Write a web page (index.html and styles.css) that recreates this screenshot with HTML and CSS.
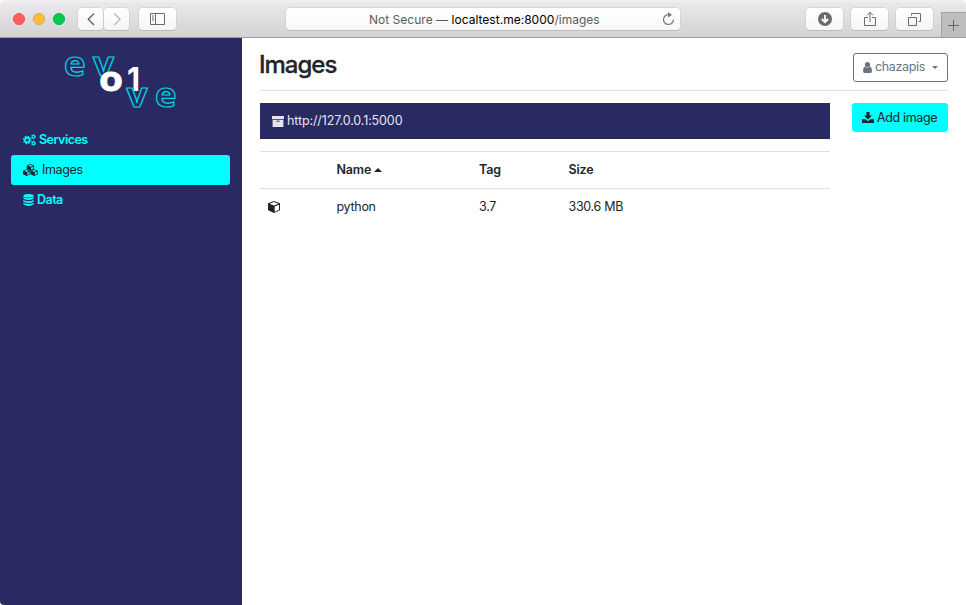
FILE: index.html
```html
<!DOCTYPE html>
<html lang="en">
<head>
<meta charset="utf-8">
<title>Images</title>
<link rel="stylesheet" href="styles.css">
</head>
<body>
<div class="window">
  <header class="toolbar">
    <div class="lights"><i class="light red"></i><i class="light yellow"></i><i class="light green"></i></div>
    <div class="history">
      <span class="tool small"><svg width="24" height="22" viewBox="0 0 24 22"><path d="M15 5.5 9.3 11.2 15 17" fill="none" stroke="#6a6a6a" stroke-width="1.5"/></svg></span>
      <span class="tool small"><svg width="24" height="22" viewBox="0 0 24 22"><path d="M9.3 5.5 15 11.2 9.3 17" fill="none" stroke="#bdbdbd" stroke-width="1.5"/></svg></span>
    </div>
    <span class="tool panel"><svg width="15" height="12" viewBox="0 0 15 12"><path d="M.5.5h14v11H.5zM5.5.5v11M2 3h2M2 5h2M2 7h2" fill="none" stroke="#6a6a6a"/></svg></span>
    <div class="address">
      <span class="url"><span class="note">Not Secure —</span> <b>localtest.me:8000</b><span class="path">/images</span></span>
      <svg class="reload" width="13" height="14" viewBox="0 0 13 14"><path d="M8.2 2.8A5 5 0 1 0 11.500 7.600" fill="none" stroke="#777" stroke-width="1.2"/><path d="M6 0 10 3 6 5.400z" fill="#777"/></svg>
    </div>
    <div class="actions">
      <span class="tool"><svg width="14" height="14" viewBox="0 0 14 14"><circle cx="7" cy="7" r="7" fill="#6a6a6a"/><path d="M7 3v7M3.800 7 7 10.200 10.200 7" fill="none" stroke="#fff" stroke-width="1.800"/></svg></span>
      <span class="tool"><svg width="12" height="16" viewBox="0 0 12 16"><path d="M4 6.500H.5v8h11v-8H8M6 11V1.500M3 4.200l3-3 3 3" fill="none" stroke="#6a6a6a"/></svg></span>
      <span class="tool"><svg width="13" height="13" viewBox="0 0 13 13"><path d="M.5 4.500h8v8h-8zM3.500 2.500v-2h9v8h-2" fill="none" stroke="#6a6a6a"/></svg></span>
    </div>
    <span class="newtab"><svg width="11" height="11" viewBox="0 0 11 11"><path d="M5.500 0v11M0 5.500h11" stroke="#666" fill="none"/></svg></span>
  </header>
  <div class="body">
    <aside class="sidebar">
      <svg class="logo" width="114" height="56" viewBox="64 53 114 56">
        <g class="outline">
          <text x="64" y="75.500" textLength="21.500" lengthAdjust="spacingAndGlyphs">e</text>
          <text x="93" y="75.500" textLength="21" lengthAdjust="spacingAndGlyphs">v</text>
        </g>
        <g class="solid">
          <text x="99" y="91" textLength="24" lengthAdjust="spacingAndGlyphs">o</text>
          <text x="127" y="91" class="one" textLength="13" lengthAdjust="spacingAndGlyphs">1</text>
        </g>
        <g class="outline">
          <text x="126.500" y="106.500" textLength="21" lengthAdjust="spacingAndGlyphs">v</text>
          <text x="155" y="106.500" textLength="21.500" lengthAdjust="spacingAndGlyphs">e</text>
        </g>
      </svg>
      <nav class="nav">
        <a class="item"><svg width="13" height="12" viewBox="0 0 13 12" fill="none" stroke="currentColor"><circle cx="4.200" cy="6" r="2.400" stroke-width="1.600"/><circle cx="4.200" cy="6" r="3.700" stroke-width="1.200" stroke-dasharray="1.450 1.456"/><circle cx="10.500" cy="2.700" r="1.400" stroke-width="1.100"/><circle cx="10.500" cy="2.700" r="2.200" stroke-width=".8" stroke-dasharray="1.150 1.153"/><circle cx="10.500" cy="9.300" r="1.400" stroke-width="1.100"/><circle cx="10.500" cy="9.300" r="2.200" stroke-width=".8" stroke-dasharray="1.150 1.153"/></svg><span class="label">Services</span></a>
        <a class="item active"><svg width="15" height="12" viewBox="0 0 15 12"><defs><g id="cube"><path d="M3.700 0 7.300 1.500V5L3.700 6.700 0 5V1.500z" fill="currentColor"/><path d="M1.300 1.700 3.700.8 6 1.700 3.700 2.700zM4.200 3.600 6.500 2.600V4.600L4.200 5.700z" fill="#0ff"/></g></defs><use href="#cube" x="3.800" y="0"/><use href="#cube" x="0" y="5.200"/><use href="#cube" x="7.500" y="5.200"/></svg><span class="label">Images</span></a>
        <a class="item"><svg width="11" height="12" viewBox="0 0 11 12" fill="currentColor"><ellipse cx="5.500" cy="1.800" rx="5.200" ry="1.800"/><path d="M.3 3.100q5.200 2.500 10.400 0v1.500q-5.200 3-10.400 0zM.3 5.900q5.200 2.600 10.400 0v1.500q-5.200 3-10.400 0zM.3 8.700q5.200 2.600 10.400 0v1.600q-5.200 3.200-10.400 0z"/></svg><span class="label">Data</span></a>
      </nav>
    </aside>
    <main class="main">
      <div class="heading">
        <h1>Images</h1>
        <button class="user"><svg width="9" height="11" viewBox="0 0 9 11" fill="currentColor"><circle cx="4.500" cy="2.700" r="2.600"/><path d="M2 4.600Q4.500 7 7 4.600 9 5.500 9 9q0 2-1.500 2h-6Q0 11 0 9q0-3.500 2-4.400z"/></svg><span class="label">chazapis</span><i class="caret"></i></button>
      </div>
      <div class="content">
        <section class="listing">
          <div class="registry"><svg width="12" height="11" viewBox="0 0 12 11"><path d="M0 0h12v3H0zM.6 3.700h10.800V11H.6z" fill="currentColor"/><path d="M4.500 5.200h3" stroke="#2a2a63"/></svg><span class="label">http://127.0.0.1:5000</span></div>
          <table>
            <thead><tr><th class="c-icon"></th><th class="c-name">Name<i class="sort"></i></th><th class="c-tag">Tag</th><th>Size</th></tr></thead>
            <tbody><tr><td><svg class="box" width="12" height="12" viewBox="0 0 12 12"><path d="M6 0 12 2.300V9.300L6 12 0 9.300V2.300z" fill="#212529"/><path d="M1.600 2.700 6 1.100 10.400 2.700 6 4.400zM6.700 5.500 11 3.800V8.700L6.700 10.700z" fill="#fff"/></svg></td><td>python</td><td>3.7</td><td>330.6 MB</td></tr></tbody>
          </table>
        </section>
        <button class="add"><svg width="12" height="11" viewBox="0 0 12 11" fill="currentColor"><path d="M4.500 0h3v3.500H10L6 7.500 2 3.500h2.500zM0 7.300h3.500L6 9.300l2.500-2H12V11H0z"/></svg><span>Add image</span></button>
      </div>
    </main>
  </div>
</div>
</body>
</html>
```
FILE: styles.css
```css
* { box-sizing: border-box; }
body { margin: 0; background: #fff; font: 12.5px/20px Inter, "Liberation Sans", sans-serif; color: #212529; }
svg { display: block; flex: none; }
.window { height: 605px; display: flex; flex-direction: column; border-radius: 5px 5px 4px 4px; overflow: hidden; }
.toolbar { height: 38px; flex: none; display: flex; align-items: flex-start; padding: 8px 0 0 13px; background: linear-gradient(#f3f1f3, #e9e7e9 4px, #d4d2d4); border-bottom: 1px solid #a09ea0; }
.lights { display: flex; gap: 8px; padding-top: 5px; width: 65px; }
.light { width: 12px; height: 12px; border-radius: 50%; border: 1px solid; }
.red { background: #ff5f5a; border-color: #e9514d; }
.yellow { background: #ffbd40; border-color: #e3a437; }
.green { background: #00ca4e; border-color: #00b543; }
.history { display: flex; gap: 1px; width: 61px; }
.tool { width: 37px; height: 22px; display: flex; align-items: center; justify-content: center; background: linear-gradient(#fff, #f5f5f5); border-radius: 4px; box-shadow: 0 0 0 .5px #c8c6c8, 0 1px 0 #b5b3b5; }
.tool.small { width: 25px; }
.address { width: 394px; height: 22px; margin-left: 110px; display: flex; align-items: center; background: linear-gradient(#fff, #f7f7f7); border-radius: 4px; box-shadow: 0 0 0 .5px #c8c6c8, 0 1px 0 #b5b3b5; padding: 0 5px 0 83px; }
.url { flex: 1; padding-top: 2px; font-size: 12px; letter-spacing: .02px; color: #5c5c5c; white-space: nowrap; }
.url b { font-weight: 400; color: #000; }
.actions { display: flex; gap: 8px; margin-left: 126px; }
.newtab { margin: 4px 0 0 8px; width: 25px; height: 25px; background: #bfbdbf; border-left: 1px solid #a3a1a3; border-top: 1px solid #a3a1a3; display: flex; align-items: center; justify-content: center; padding-right: 2px; }
.body { flex: 1; display: flex; }
.sidebar { width: 242px; background: #2a2a63; padding: 15px 12px 0 11px; }
.logo { margin-left: 53px; overflow: visible; font-family: "Open Sans", Inter, sans-serif; font-weight: 700; font-size: 34px; }
.outline { fill: none; stroke: #00d3df; stroke-width: 1.2; }
.solid { fill: #fff; stroke: #fff; stroke-width: .8; }
.one { font-family: Inter, sans-serif; font-size: 32px; stroke: none; }
.nav { margin-top: 16px; }
.item { height: 30px; padding-left: 12px; display: flex; align-items: center; gap: 3px; color: #0ff; font-weight: 600; letter-spacing: -.53px; border-radius: 3px; }
.active { gap: 4px; background: #0ff; color: #212529; font-weight: 400; letter-spacing: -.35px; }
.label { padding-bottom: 1px; }
.main { flex: 1; padding: 0 18px; }
.heading { height: 53px; display: flex; justify-content: space-between; border-bottom: 1px solid #dee2e6; }
h1 { margin: 12px 0 0 -1px; font-size: 24px; line-height: 30px; font-weight: 500; letter-spacing: -1px; -webkit-text-stroke: .3px currentColor; }
button { font: inherit; height: 29px; border: 1px solid; border-radius: 3px; display: flex; align-items: center; padding: 0 0 0 9px; white-space: nowrap; letter-spacing: -.36px; }
.user { margin-top: 15px; width: 95px; color: #6c757d; background: #fff; }
.user svg { margin-right: 3px; }
.caret { border: 3.500px solid transparent; border-top-color: currentColor; border-bottom: 0; margin-left: 7px; }
.content { display: flex; justify-content: space-between; padding-top: 12px; }
.listing { width: 570px; }
.registry { height: 36px; background: #2a2a63; color: #e4e4f0; display: flex; align-items: center; padding-left: 12px; gap: 3px; letter-spacing: -.12px; }
.add { width: 96px; background: #0ff; border-color: #0ff; color: #212529; }
.add svg { margin-right: 3px; }
table { width: 100%; margin-top: 12px; border-collapse: separate; border-spacing: 0; table-layout: fixed; }
th, td { height: 37px; padding: 0 8px 1px; border-top: 1px solid #dee2e6; text-align: left; letter-spacing: -.3px; }
th { font-weight: 600; letter-spacing: -.15px; }
.box { margin-top: 1px; }
.c-icon { width: 68.500px; }
.c-name { width: 142.500px; }
.c-tag { width: 89.500px; }
.sort { display: inline-block; border: 4px solid transparent; border-bottom-color: currentColor; border-top: 0; margin: 0 0 2px 3px; }
```
